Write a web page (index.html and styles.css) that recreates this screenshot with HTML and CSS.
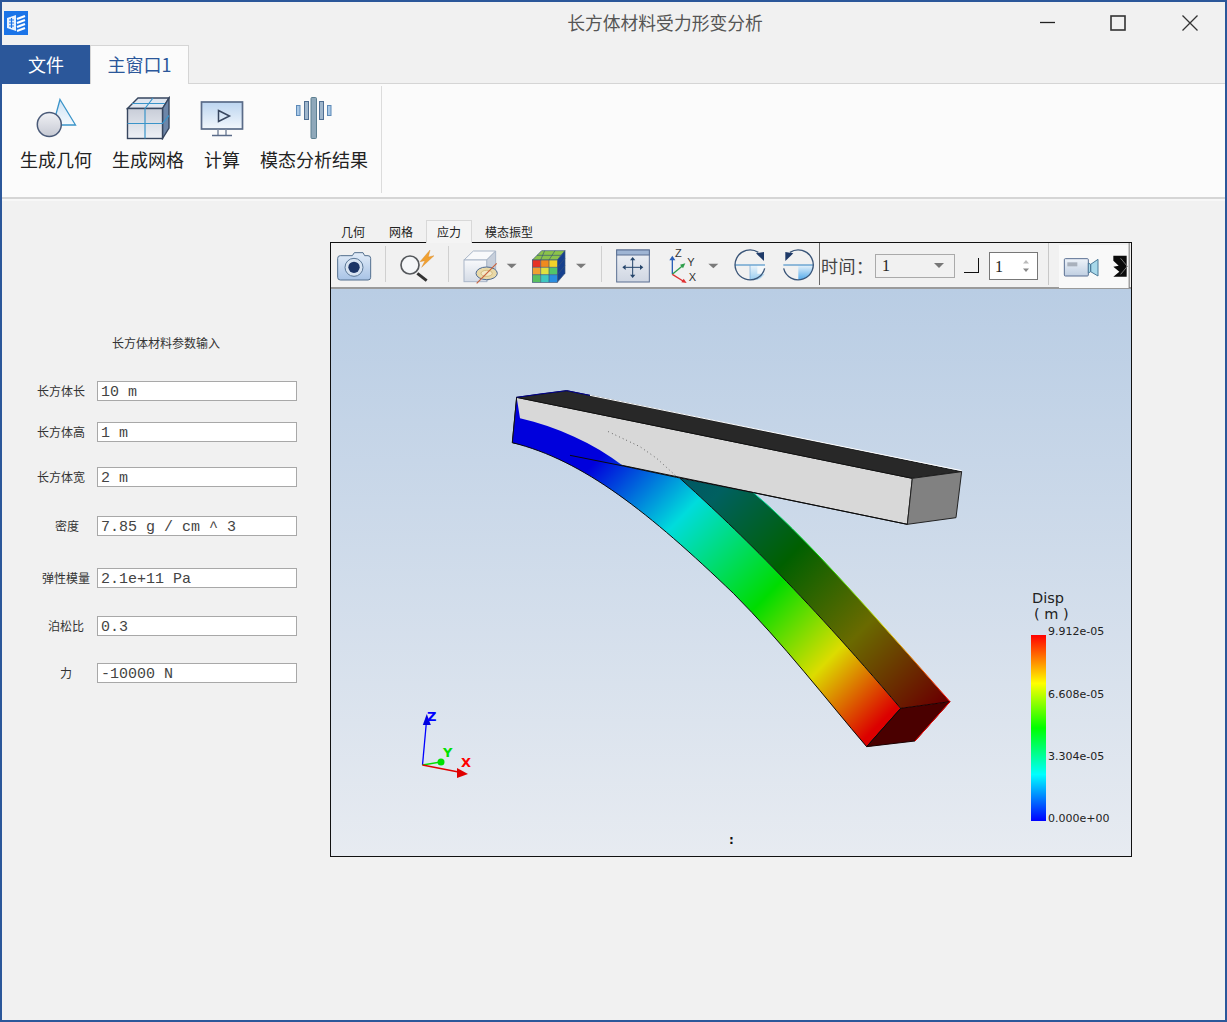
FILE: index.html
```html
<!DOCTYPE html>
<html lang="zh">
<head>
<meta charset="utf-8">
<title>长方体材料受力形变分析</title>
<link rel="stylesheet" href="styles.css">
</head>
<body>
<div class="window">
  <header class="titlebar">
    <svg class="appicon" width="24" height="24" viewBox="0 0 24 24">
      <rect width="24" height="24" fill="#1b74e8"/>
      <path d="M3 7l9-3v16l-9-3z" fill="#fff" opacity=".9"/>
      <path d="M5 9h5M5 12h5M5 15h5M7.500 7v10" stroke="#1b74e8" stroke-width="1.200" fill="none"/>
      <path d="M13 8l8-3M13 12l8-3M13 16l8-3M13 20l8-3" stroke="#fff" stroke-width="2.200" fill="none"/>
    </svg>
    <div class="title">长方体材料受力形变分析</div>
    <div class="controls">
      <svg width="71" height="16" viewBox="0 0 71 16"><path d="M28 7.500h15" stroke="#222" stroke-width="1.300"/></svg>
      <svg width="71" height="16" viewBox="0 0 71 16"><rect x="28" y="1" width="14" height="14" fill="none" stroke="#333" stroke-width="1.600"/></svg>
      <svg width="71" height="16" viewBox="0 0 71 16"><path d="M28.500 .5l15 15M43.500 .5l-15 15" stroke="#333" stroke-width="1.300"/></svg>
    </div>
  </header>

  <nav class="maintabs">
    <div class="filetab">文件</div>
    <div class="hometab">主窗口1</div>
  </nav>

  <section class="ribbon">
    <div class="ribbon-group">
      <div class="ribbon-btn">
        <svg width="44" height="44" viewBox="34 96 44 44">
          <defs>
            <linearGradient id="tri" x1="0" y1="0" x2="0" y2="1"><stop offset="0" stop-color="#cfe3f5"/><stop offset="1" stop-color="#f4f9fd"/></linearGradient>
            <linearGradient id="circ" x1="0" y1="0" x2="0" y2="1"><stop offset="0" stop-color="#f0f1f5"/><stop offset="1" stop-color="#c6c9d3"/></linearGradient>
          </defs>
          <path d="M60 99.500L75.500 125H53z" fill="url(#tri)" stroke="#3a94c9" stroke-width="1.300"/>
          <circle cx="49.300" cy="124.500" r="12" fill="url(#circ)" stroke="#4a5a78" stroke-width="1.500"/>
        </svg>
        <span>生成几何</span>
      </div>
      <div class="ribbon-btn">
        <svg width="44" height="44" viewBox="126 96 44 44">
          <defs><linearGradient id="cubef" x1="0" y1="0" x2="0" y2="1"><stop offset="0" stop-color="#c8cdd8"/><stop offset="1" stop-color="#eef1f6"/></linearGradient></defs>
          <path d="M127.500 108.500L138 98h31l-6.500 10.500z" fill="#dfe6f0" stroke="#37465f" stroke-width="1.400"/>
          <path d="M162.500 108.500L169 98v30l-6.500 10.500z" fill="#6d86a8" stroke="#37465f" stroke-width="1.400"/>
          <rect x="127.500" y="108.500" width="35" height="30" fill="url(#cubef)" stroke="#37465f" stroke-width="1.400"/>
          <path d="M145 108.500v30M127.500 123.500h35l6.500-8M145 108.500l8-10.500M132 103.500h33" stroke="#3a94c9" stroke-width="1.200" fill="none"/>
        </svg>
        <span>生成网格</span>
      </div>
      <div class="ribbon-btn">
        <svg width="44" height="44" viewBox="200 96 44 44">
          <defs><linearGradient id="scr" x1="0" y1="0" x2="0" y2="1"><stop offset="0" stop-color="#bcd5f0"/><stop offset="1" stop-color="#f2f7fc"/></linearGradient></defs>
          <rect x="201.500" y="102" width="41" height="27" fill="url(#scr)" stroke="#5a6b88" stroke-width="1.700"/>
          <path d="M218.500 110.500l11 5.500-11 5.500z" fill="none" stroke="#37465f" stroke-width="1.500"/>
          <path d="M218 129v6M226 129v6" stroke="#7d8aa0" stroke-width="1.500"/>
          <path d="M212 135.500h20" stroke="#5a6b88" stroke-width="1.500"/>
        </svg>
        <span>计算</span>
      </div>
      <div class="ribbon-btn">
        <svg width="44" height="44" viewBox="292 96 44 44">
          <rect x="296.500" y="105.500" width="3.500" height="10" fill="#a9c8e6" stroke="#5d8ab8"/>
          <rect x="304.500" y="101.500" width="4" height="18" fill="#9fb6cc" stroke="#4f6e92"/>
          <rect x="311" y="97.500" width="5.500" height="41" rx="1" fill="#8fa8ba" stroke="#5d7f90"/>
          <rect x="319.500" y="101.500" width="4" height="18" fill="#9fb6cc" stroke="#4f6e92"/>
          <rect x="327.500" y="105.500" width="3.500" height="10" fill="#a9c8e6" stroke="#5d8ab8"/>
        </svg>
        <span>模态分析结果</span>
      </div>
    </div>
  </section>

  <main class="workspace">
    <form class="params">
      <div class="params-title">长方体材料参数输入</div>
      <div class="row row1"><label class="lab lab-a">长方体长</label><div class="field">10 m</div></div>
      <div class="row row2"><label class="lab lab-a">长方体高</label><div class="field">1 m</div></div>
      <div class="row row3"><label class="lab lab-a">长方体宽</label><div class="field">2 m</div></div>
      <div class="row row4"><label class="lab lab-b">密度</label><div class="field">7.85 g / cm ^ 3</div></div>
      <div class="row row5"><label class="lab lab-c">弹性模量</label><div class="field">2.1e+11 Pa</div></div>
      <div class="row row6"><label class="lab lab-d">泊松比</label><div class="field">0.3</div></div>
      <div class="row row7"><label class="lab lab-e">力</label><div class="field">-10000 N</div></div>
    </form>

    <div class="viewer-col">
      <div class="vtabs">
        <div class="vtab">几何</div>
        <div class="vtab">网格</div>
        <div class="vtab active">应力</div>
        <div class="vtab">模态振型</div>
      </div>
      <div class="viewer">
        <div class="toolbar">
          <svg width="54" height="46" viewBox="3 84 162 138">
            <defs><linearGradient id="cam" x1="0" y1="0" x2="0" y2="1"><stop offset="0" stop-color="#e2ecf8"/><stop offset="1" stop-color="#a8c3e6"/></linearGradient></defs>
            <path d="M23 130q0-8 8-8h36l6-9h26l5 9h10q8 0 8 8v57q0 8-8 8H31q-8 0-8-8z" fill="url(#cam)" stroke="#54708f" stroke-width="3"/>
            <circle cx="72" cy="157" r="27" fill="#d8e4f2" stroke="#5b7897" stroke-width="3"/>
            <circle cx="72" cy="157" r="17" fill="#1c3566"/>
          </svg>
          <div class="sep"></div>
          <svg width="62" height="46" viewBox="168 84 186 138">
            <path d="M300 105l-30 35 15-3-10 20 37-35-17 4 5-21z" fill="#f0a030" stroke="#d08020" stroke-width="1"/>
            <path d="M262 175l28 22" stroke="#333" stroke-width="9"/>
            <circle cx="240" cy="150" r="27" fill="#f4f6f8" stroke="#55585c" stroke-width="5"/>
          </svg>
          <div class="sep"></div>
          <svg width="152" height="46" viewBox="357 84 456 138">
            <defs><linearGradient id="box" x1="0" y1="0" x2="0" y2="1"><stop offset="0" stop-color="#f8f9fb"/><stop offset="1" stop-color="#d4dbe6"/></linearGradient></defs>
            <path d="M402 135l28-27h67l-27 27z" fill="#f8f9fb" stroke="#a9b6c8" stroke-width="3"/>
            <path d="M470 135l27-27v62l-27 30z" fill="#c7cfdb" stroke="#a9b6c8" stroke-width="3"/>
            <rect x="402" y="135" width="68" height="65" fill="url(#box)" stroke="#a9b6c8" stroke-width="3"/>
            <ellipse cx="470" cy="175" rx="32" ry="19" fill="#e9d9a8" stroke="#4e6a92" stroke-width="3"/>
            <ellipse cx="470" cy="175" rx="17" ry="9" fill="#f3e8c6" stroke="#c9a860" stroke-width="2"/>
            <path d="M440 205l60-60" stroke="#c8623c" stroke-width="3.500"/>
            <path d="M530 146h30l-15 14z" fill="#7a7a7a"/>
            <path d="M607 135l28-28h70l-23 28z" fill="#8bc34a" stroke="#3a5578" stroke-width="2"/>
            <path d="M682 135l23-28v68l-23 27z" fill="#16408e" stroke="#3a5578" stroke-width="2"/>
            <rect x="607" y="135" width="25" height="22" fill="#e63225"/>
            <rect x="632" y="135" width="25" height="22" fill="#f08a1e"/>
            <rect x="657" y="135" width="25" height="22" fill="#f2d22a"/>
            <rect x="607" y="157" width="25" height="22" fill="#f0a030"/>
            <rect x="632" y="157" width="25" height="22" fill="#dfe040"/>
            <rect x="657" y="157" width="25" height="22" fill="#52c56a"/>
            <rect x="607" y="179" width="25" height="23" fill="#58c060"/>
            <rect x="632" y="179" width="25" height="23" fill="#3fc7c0"/>
            <rect x="657" y="179" width="25" height="23" fill="#2a8ee0"/>
            <path d="M632 135v67M657 135v67M607 157h75M607 179h75M644 107l-12 28M675 107l-18 28M621 121h72M682 157l23-27M682 179l23-27" stroke="#3a5578" stroke-width="2" fill="none"/>
            <rect x="607" y="135" width="75" height="67" fill="none" stroke="#3a5578" stroke-width="2"/>
            <path d="M738 146h30l-15 14z" fill="#7a7a7a"/>
          </svg>
          <div class="sep"></div>
          <svg width="58" height="46" viewBox="816 84 174 138">
            <defs><linearGradient id="fit" x1="0" y1="0" x2="0" y2="1"><stop offset="0" stop-color="#eef1f6"/><stop offset="1" stop-color="#cfd6e2"/></linearGradient></defs>
            <rect x="860" y="105" width="98" height="96" fill="url(#fit)" stroke="#5a6f92" stroke-width="3"/>
            <rect x="860" y="105" width="98" height="15" fill="#9fb5d4" stroke="#5a6f92" stroke-width="3"/>
            <path d="M908 135v45M886 157h45" stroke="#25456b" stroke-width="3"/>
            <path d="M908 126l-8 10h16zM908 189l-8-10h16zM877 157l10-8v16zM940 157l-10-8v16z" fill="#25456b"/>
          </svg>
          <svg width="65" height="46" viewBox="990 84 195 138">
            <path d="M1027 178v-46" stroke="#2a5fb8" stroke-width="4"/>
            <path d="M1027 122l-9 14h18z" fill="#2a5fb8"/>
            <path d="M1027 178l30-25" stroke="#2e9e4a" stroke-width="4"/>
            <path d="M1066 145l-16 4 9 11z" fill="#2e9e4a"/>
            <path d="M1027 178l32 20" stroke="#e03030" stroke-width="4"/>
            <path d="M1070 204l-16-2 7-11z" fill="#e03030"/>
            <text x="1035" y="125" class="axis-t">Z</text>
            <text x="1072" y="153" class="axis-t">Y</text>
            <text x="1076" y="199" class="axis-t">X</text>
            <path d="M1135 146h30l-15 14z" fill="#7a7a7a"/>
          </svg>
          <svg width="49" height="46" viewBox="-15 24 147 138">
            <defs><linearGradient id="rq" x1="0" y1="0" x2="0" y2="1"><stop offset="0" stop-color="#e8f3fb"/><stop offset="1" stop-color="#5fb2ea"/></linearGradient></defs>
            <path d="M60 90h45a45 45 0 0 1-45 45z" fill="#f4f8fb"/>
            <path d="M60 90h22v26h22q-8 14-22 18H60z" fill="url(#rq)" opacity=".6"/>
            <path d="M15 90h90" stroke="#2f80c0" stroke-width="3"/>
            <path d="M60 90v45" stroke="#6fa8d6" stroke-width="2"/>
            <path d="M104 100A45 45 0 1 1 85 52" fill="none" stroke="#3a5578" stroke-width="4"/>
            <path d="M78 55l24-4v27z" fill="#1f3a68"/>
          </svg>
          <svg width="45" height="46" viewBox="132 24 135 138">
            <defs><linearGradient id="rq2" x1="0" y1="0" x2="0" y2="1"><stop offset="0" stop-color="#e8f3fb"/><stop offset="1" stop-color="#4fa8ea"/></linearGradient></defs>
            <path d="M205 90h45a45 45 0 0 1-45 45z" fill="url(#rq2)"/>
            <path d="M160 90h90" stroke="#2f80c0" stroke-width="3"/>
            <path d="M161 100A45 45 0 1 0 180 52" fill="none" stroke="#3a5578" stroke-width="4"/>
            <path d="M190 55l-24-4v27z" fill="#1f3a68"/>
          </svg>
          <div class="sep dark"></div>
          <div class="time-label">时间：</div>
          <div class="combo"><span>1</span><i class="caret"></i></div>
          <div class="check"></div>
          <div class="spin"><span>1</span><svg width="8" height="16" viewBox="0 0 8 16"><path d="M4 2l3 3.500H1z" fill="#bbb"/><path d="M4 14l3-3.500H1z" fill="#888"/></svg></div>
          <div class="sep end"></div>
          <svg class="video" width="81" height="46" viewBox="957 24 243 138">
            <rect x="987" y="30" width="210" height="129" fill="#f9f9f9"/>
            <path d="M1197.500 24v135" stroke="#777" stroke-width="3"/>
            <defs><linearGradient id="vid" x1="0" y1="0" x2="0" y2="1"><stop offset="0" stop-color="#eef3f9"/><stop offset="1" stop-color="#c0cfe2"/></linearGradient></defs>
            <rect x="1003" y="71" width="72" height="52" rx="3" fill="url(#vid)" stroke="#5a6f92" stroke-width="3"/>
            <rect x="1012" y="82" width="30" height="12" fill="#a9b1bc"/>
            <path d="M1075 84l7 4v22l-7 4zM1082 88l22-15v50l-22-13z" fill="#a8d8ea" stroke="#4d7a98" stroke-width="3"/>
            <path d="M1150 62h40v63h-40l18-15-18-15 16-3-16-15z" fill="#0b0b0b"/>
            <path d="M1172 70l20 24-20 24" fill="none" stroke="#777" stroke-width="3"/>
          </svg>
        </div>
        <svg class="scene" width="800" height="567" viewBox="331 289 800 567">
          <defs>
            <linearGradient id="sky" x1="0" y1="0" x2="0" y2="1"><stop offset="0" stop-color="#b9cde4"/><stop offset="1" stop-color="#e7ebf1"/></linearGradient>
            <linearGradient id="front" gradientUnits="userSpaceOnUse" x1="300" y1="230" x2="1130" y2="1040">
              <stop offset="0" stop-color="#0000dc"/><stop offset=".26" stop-color="#00dcdc"/><stop offset=".56" stop-color="#00dc00"/><stop offset=".79" stop-color="#dcdc00"/><stop offset="1" stop-color="#dc0000"/>
            </linearGradient>
            <linearGradient id="side" gradientUnits="userSpaceOnUse" x1="440" y1="170" x2="1290" y2="1000">
              <stop offset="0" stop-color="#004a6a"/><stop offset=".23" stop-color="#006060"/><stop offset=".47" stop-color="#006000"/><stop offset=".73" stop-color="#6a6a00"/><stop offset="1" stop-color="#6a0000"/>
            </linearGradient>
            <linearGradient id="edge" gradientUnits="userSpaceOnUse" x1="760" y1="338" x2="1350" y2="965">
              <stop offset="0" stop-color="#00dcb0"/><stop offset=".3" stop-color="#00dc00"/><stop offset=".65" stop-color="#dcdc00"/><stop offset="1" stop-color="#ff0000"/>
            </linearGradient>
            <linearGradient id="bar" x1="0" y1="0" x2="0" y2="1">
              <stop offset="0" stop-color="#ff0000"/><stop offset=".26" stop-color="#ffff00"/><stop offset=".5" stop-color="#00ff00"/><stop offset=".75" stop-color="#00ffff"/><stop offset="1" stop-color="#0000ff"/>
            </linearGradient>
          </defs>
          <rect x="331" y="289" width="800" height="567" fill="url(#sky)"/>
          <g transform="translate(500 380) scale(.33333)" stroke-linejoin="round">
            <path d="M50 52L1237 295L1222 433L37 188z" fill="#d8d8d8" stroke="#111" stroke-width="3"/>
            <path d="M50 52L200 32L1385 275L1237 295z" fill="#282828" stroke="#111" stroke-width="3"/>
            <path d="M1237 295L1385 275L1368 413L1222 433z" fill="#818181" stroke="#222" stroke-width="3"/>
            <path d="M270 46L1385 272" stroke="#fff" stroke-width="3"/>
            <path d="M50 52L120 42L200 32L270 46" fill="none" stroke="#000090" stroke-width="3"/>
            <path d="M50 52L60 115C170 140 280 190 370 258L530 292L540 295C700 440 900 630 1202 985L1100 1100C980 960 850 790 700 640C450 400 250 240 37 188z" fill="url(#front)"/>
            <path d="M540 295L760 338C900 455 1100 680 1350 965L1202 985C900 630 700 440 540 295z" fill="url(#side)"/>
            <path d="M1202 985L1350 965L1245 1083L1100 1100z" fill="#4a0000" stroke="#1a0000" stroke-width="3"/>
            <path d="M760 338C900 455 1100 680 1350 965L1245 1083" fill="none" stroke="url(#edge)" stroke-width="3"/>
            <path d="M37 188C250 240 450 400 700 640C850 790 980 960 1100 1100" fill="none" stroke="#0a0a0a" stroke-width="3"/>
            <path d="M540 295C700 440 900 630 1202 985L1100 1100" fill="none" stroke="#0a0a0a" stroke-width="3"/>
            <path d="M210 226L370 258L530 292L760 338L1222 433" fill="none" stroke="#0a0a0a" stroke-width="3"/>
            <path d="M325 155L420 200L470 235L530 290" fill="none" stroke="#111" stroke-width="2.500" stroke-dasharray="2 10"/>
            <path d="M50 52L37 188" stroke="#111" stroke-width="3"/>
          </g>
          <g class="triad">
            <path d="M422.500 765l4-44" stroke="#0000ff" stroke-width="1.300" fill="none"/>
            <path d="M426.800 714l-4 11h8z" fill="#0000e0"/>
            <path d="M422.500 765l18-3" stroke="#00e000" stroke-width="1.300"/>
            <circle cx="441" cy="762" r="3.500" fill="#00e000"/>
            <path d="M422.500 765l36 7" stroke="#e00000" stroke-width="1.300"/>
            <path d="M468 774l-11-6v10z" fill="#e00000"/>
            <text x="427" y="721" class="ax az">Z</text>
            <text x="443" y="757" class="ax ay">Y</text>
            <text x="461" y="767" class="ax ar">X</text>
          </g>
          <rect x="1031" y="635" width="15" height="186" fill="url(#bar)"/>
          <text x="1032" y="603" class="leg-title">Disp</text>
          <text x="1034" y="619" class="leg-title">( m )</text>
          <text x="1048" y="635" class="leg">9.912e-05</text>
          <text x="1048" y="698" class="leg">6.608e-05</text>
          <text x="1048" y="760" class="leg">3.304e-05</text>
          <text x="1048" y="822" class="leg">0.000e+00</text>
          <text x="729" y="844" class="colon">:</text>
        </svg>
      </div>
    </div>
  </main>
</div>
</body>
</html>
```

FILE: styles.css
```css
* { box-sizing: border-box; }
html, body { margin: 0; padding: 0; }
body {
  width: 1227px;
  height: 1022px;
  overflow: hidden;
  font-family: "Noto Sans CJK SC", "Liberation Sans", sans-serif;
  background: #f1f1f1;
}
.window {
  width: 1227px;
  height: 1022px;
  border: 2px solid #2b579a;
  background: #f1f1f1;
  display: flex;
  flex-direction: column;
}
.titlebar {
  height: 43px;
  display: flex;
  align-items: flex-start;
  flex: none;
}
.appicon { margin: 9px 0 0 2px; flex: none; }
.title {
  flex: 1;
  padding-left: 290px;
  padding-top: 7px;
  text-align: center;
  font-size: 17.8px;
  line-height: 26px;
  color: #555;
}
.controls { display: flex; margin-top: 13px; flex: none; }
.controls svg { display: block; }

.maintabs { height: 39px; display: flex; flex: none; border-bottom: 1px solid #d5d5d5; }
.filetab {
  width: 88px;
  background: #2b579a;
  color: #fff;
  font-size: 18px;
  line-height: 38px;
  text-align: center;
  margin-bottom: -1px;
}
.hometab {
  width: 99px;
  background: #fbfbfb;
  color: #2b579a;
  font-size: 18px;
  line-height: 37px;
  text-align: center;
  border: 1px solid #d5d5d5;
  border-bottom: 0;
  margin-bottom: -1px;
  position: relative;
}

.ribbon {
  height: 115px;
  flex: none;
  background: #fbfbfb;
  border-bottom: 2px solid #d5d5d5;
  padding-top: 2px;
}
.ribbon-group {
  width: 380px;
  height: 107px;
  border-right: 1px solid #dcdcdc;
  display: flex;
  gap: 20px;
  padding: 10px 0 0 18px;
}
.ribbon-btn { display: flex; flex-direction: column; align-items: center; }
.ribbon-btn svg { display: block; flex: none; margin: 0 -4px; }
.ribbon-btn span {
  font-size: 18px;
  line-height: 26px;
  margin-top: 6px;
  color: #222;
  white-space: nowrap;
}

.workspace { flex: 1; display: flex; min-height: 0; border-top: 2px solid #f7f7f7; }

.params { width: 328px; flex: none; padding-top: 134px; }
.params-title {
  font-size: 12px;
  line-height: 16px;
  text-align: center;
  color: #333;
}
.row { display: flex; height: 20px; align-items: center; }
.row1 { margin-top: 30px; }
.row2 { margin-top: 21px; }
.row3 { margin-top: 25px; }
.row4 { margin-top: 29px; }
.row5 { margin-top: 32px; }
.row6 { margin-top: 28px; }
.row7 { margin-top: 27px; }
.lab {
  width: 95px;
  text-align: right;
  font-size: 12px;
  line-height: 20px;
  color: #333;
  flex: none;
  white-space: nowrap;
}
.lab-a { padding-right: 12px; }
.lab-b { padding-right: 18px; }
.lab-c { padding-right: 7px; }
.lab-d { padding-right: 13px; }
.lab-e { padding-right: 25px; }
.field {
  width: 200px;
  height: 20px;
  background: #fff;
  border: 1px solid #a8a8a8;
  padding-left: 3px;
  font-family: "Liberation Mono", monospace;
  font-size: 15px;
  line-height: 21px;
  color: #444;
  white-space: nowrap;
  overflow: hidden;
}

.viewer-col { width: 802px; flex: none; padding-top: 19px; }
.vtabs { display: flex; gap: 2px; height: 22px; position: relative; }
.vtab {
  padding: 0 11px;
  height: 22px;
  font-size: 12px;
  line-height: 24px;
  color: #222;
}
.vtab.active {
  height: 23px;
  background: #f4f4f4;
  border: 1px solid #d8d8d8;
  border-bottom: 0;
  padding: 0 10px;
  position: relative;
  z-index: 1;
  line-height: 22px;
}
.viewer {
  width: 802px;
  height: 615px;
  border: 1px solid #111;
  display: flex;
  flex-direction: column;
  background: #f1f1f1;
}
.toolbar {
  height: 46px;
  flex: none;
  display: flex;
  align-items: stretch;
  border-bottom: 2px solid #9a9a9a;
  position: relative;
}
.toolbar > svg { display: block; flex: none; height: 46px; }
.sep { width: 1px; flex: none; background: #d0d0d0; margin: 3px 0 5px; }
.sep.dark { background: #6a6a6a; margin: 0 0 2px; }
.sep.end { background: #c8c8c8; margin: 0 0 2px 10px; }
.time-label {
  width: 54px;
  margin-left: 1px;
  font-size: 17px;
  line-height: 46px;
  color: #444;
  white-space: nowrap;
  letter-spacing: .5px;
}
.combo {
  width: 80px;
  height: 24px;
  margin-top: 11px;
  border: 1px solid #aaa;
  padding-left: 6px;
  font-family: "Liberation Serif", serif;
  font-size: 16px;
  line-height: 22px;
  display: flex;
  justify-content: space-between;
  color: #222;
}
.caret {
  width: 0; height: 0;
  margin: 8px 10px 0 0;
  border-left: 5px solid transparent;
  border-right: 5px solid transparent;
  border-top: 5px solid #777;
}
.check {
  width: 15px;
  height: 15px;
  margin: 15px 0 0 9px;
  border-right: 1px solid #111;
  border-bottom: 1px solid #111;
}
.spin {
  width: 49px;
  height: 28px;
  margin: 9px 0 0 10px;
  background: #fff;
  border: 1px solid #777;
  padding: 0 7px 0 5px;
  font-family: "Liberation Serif", serif;
  font-size: 16px;
  line-height: 27px;
  display: flex;
  justify-content: space-between;
  align-items: center;
  color: #222;
}
.axis-t { font: 33px "Liberation Sans", sans-serif; fill: #333; }
.scene { display: block; flex: none; }
.ax { font: bold 13px "DejaVu Sans", sans-serif; }
.az { fill: #0000ff; }
.ay { fill: #00e000; }
.ar { fill: #ff0000; }
.leg-title { font: 14.500px "DejaVu Sans", sans-serif; fill: #222; }
.leg { font: 11px "DejaVu Sans", sans-serif; fill: #222; }
.colon { font: bold 12px "DejaVu Sans", sans-serif; fill: #111; }
```
